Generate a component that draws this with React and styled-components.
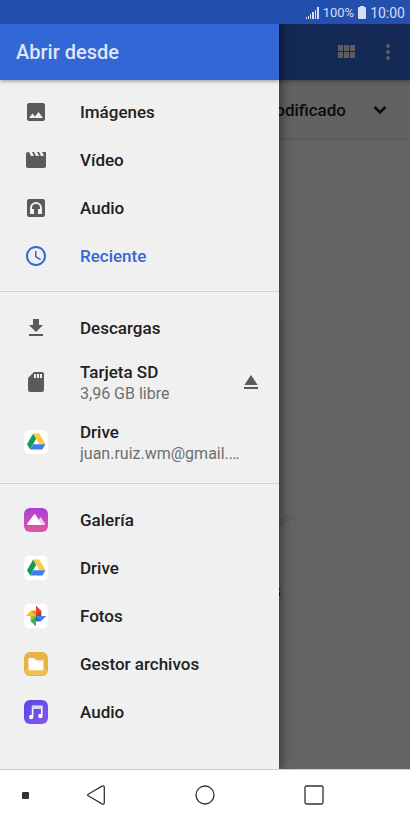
import React, { useState } from "react";
import styled, { createGlobalStyle } from "styled-components";

const GlobalStyle = createGlobalStyle`
  * {
    box-sizing: border-box;
  }

  body {
    margin: 0;
    background: #ffffff;
    font-family: Roboto, "Noto Sans", sans-serif;
  }

  button {
    border: 0;
    padding: 0;
    background: none;
    color: inherit;
    font: inherit;
    cursor: pointer;
  }
`;

const Screen = styled.div`
  display: flex;
  flex-direction: column;
  min-height: 100vh;
`;

const StatusBar = styled.div`
  display: flex;
  align-items: center;
  justify-content: flex-end;
  gap: 4px;
  height: 24px;
  padding: 2px 5px 0 0;
  background: #2350ae;
  color: #d5def2;
`;

const StatusText = styled.span`
  font-size: ${props => props.size};
  line-height: 22px;
`;

// page, scrim and drawer share one grid cell
const Stage = styled.div`
  display: grid;
  grid-template-columns: 100%;
  flex: 1;
  overflow: hidden;

  > * {
    grid-area: 1 / 1;
  }
`;

const Page = styled.main`
  display: flex;
  flex-direction: column;
  background: #fafafa;
`;

const Toolbar = styled.header`
  display: flex;
  align-items: center;
  justify-content: flex-end;
  gap: 18px;
  height: 56px;
  padding-right: 10px;
  background: #3367d6;
  color: #e8eaf0;
  box-shadow: 0 1px 4px rgba(0, 0, 0, 0.4);
  z-index: 1;
`;

const IconButton = styled.button`
  display: flex;
  width: 24px;
  height: 24px;
  flex: none;
`;

const SortBar = styled.div`
  display: flex;
  align-items: center;
  justify-content: flex-end;
  height: 60px;
  border-bottom: 1px solid #dcdcdc;
  background: #f4f4f4;
`;

const SortButton = styled.button`
  display: flex;
  align-items: center;
  gap: 22px;
  padding-right: 18px;
  font-size: 17px;
  font-weight: 500;
  line-height: 24px;
  color: #212121;
`;

const Empty = styled.div`
  display: flex;
  flex: 1;
  flex-direction: column;
  align-items: center;
  justify-content: center;
  gap: 52px;
  padding-top: 16px;
`;

const EmptyText = styled.p`
  margin: 0;
  font-size: 19px;
  line-height: 24px;
  color: #212121;
`;

const Scrim = styled.div`
  z-index: 2;
  background: rgba(0, 0, 0, 0.6);
`;

const Drawer = styled.aside`
  z-index: 3;
  width: calc(100% - 131px);
  background: #f0f0f0;
  box-shadow: 2px 0 10px rgba(0, 0, 0, 0.5);
`;

const DrawerHeader = styled.div`
  display: flex;
  align-items: center;
  height: 56px;
  padding: 0 16px;
  background: #3367d6;
  box-shadow: 0 1px 4px rgba(0, 0, 0, 0.4);
`;

const Title = styled.h1`
  margin: 0;
  font-size: 20px;
  font-weight: 500;
  line-height: 28px;
  color: #dfe8fb;
`;

const Roots = styled.nav`
  padding-bottom: 8px;
`;

const Section = styled.ul`
  margin: 0;
  padding: ${props => (props.$first ? "8px" : "12px")} 0 11px;
  list-style: none;

  & + & {
    border-top: 1px solid #d0d0d0;
  }
`;

const Row = styled.li`
  display: flex;
  align-items: center;
  height: ${props => (props.$tall ? "60px" : "48px")};
  padding-right: 16px;
`;

const RootButton = styled.button`
  display: flex;
  align-items: center;
  gap: 32px;
  flex: 1;
  min-width: 0;
  height: 100%;
  padding-left: 24px;
  text-align: left;
  color: ${props => (props.$selected ? "#3367d6" : "#212121")};
`;

const RootIcon = styled.span`
  display: flex;
  flex: none;
  width: 24px;
  height: 24px;
  color: ${props => (props.$selected ? "#3367d6" : "#5a5a5a")};
`;

const Labels = styled.span`
  display: flex;
  flex-direction: column;
  min-width: 0;
`;

const Label = styled.span`
  font-size: 17px;
  font-weight: 500;
  line-height: 22px;
`;

const Summary = styled.span`
  overflow: hidden;
  font-size: 16px;
  line-height: 21px;
  color: #6e6e6e;
  text-overflow: ellipsis;
  white-space: nowrap;
`;

const Eject = styled(IconButton)`
  color: #5a5a5a;
`;

const NavBar = styled.footer`
  display: grid;
  grid-template-columns: 42px 1fr 1fr 1fr 42px;
  height: 51px;
  border-top: 1px solid #cfcfcf;
  background: #ffffff;
  color: #333333;
`;

const NavButton = styled.button`
  display: flex;
  align-items: center;
  justify-content: center;
  padding-left: ${props => (props.$edge ? "9px" : "0")};
`;

const Glyph = ({ d, size = 24 }) => (
  <svg width={size} height={size} viewBox="0 0 24 24" fill="currentColor">
    <path d={d} />
  </svg>
);

const PATHS = {
  image:
    "M21 19V5c0-1.1-.9-2-2-2H5c-1.1 0-2 .9-2 2v14c0 1.1.9 2 2 2h14c1.1 0 2-.9 2-2zM8.500 13.500l2.500 3.010L14.500 12l4.500 6H5l3.500-4.500z",
  video:
    "M18 4l2 4h-3l-2-4h-2l2 4h-3l-2-4H8l2 4H7L5 4H4c-1.100 0-1.990.900-1.990 2L2 18c0 1.100.900 2 2 2h16c1.100 0 2-.900 2-2V4h-4z",
  audio:
    "M5 3h14a2 2 0 0 1 2 2v14a2 2 0 0 1-2 2H5a2 2 0 0 1-2-2V5a2 2 0 0 1 2-2zM12 6a6 6 0 0 0-6 6v6h4v-5H8v-1a4 4 0 0 1 8 0v1h-2v5h4v-6a6 6 0 0 0-6-6z",
  recent:
    "M11.990 2C6.470 2 2 6.480 2 12s4.470 10 9.990 10C17.520 22 22 17.520 22 12S17.520 2 11.990 2zM12 20c-4.420 0-8-3.580-8-8s3.580-8 8-8 8 3.580 8 8-3.580 8-8 8zm.5-13H11v6l5.250 3.150.75-1.230-4.500-2.670z",
  download: "M19 9h-4V3H9v6H5l7 7 7-7zM5 18v2h14v-2H5z",
  sd:
    "M18 2h-8L4.020 8 4 20c0 1.100.9 2 2 2h12c1.100 0 2-.9 2-2V4c0-1.100-.9-2-2-2zm-6 6h-2V4h2v4zm3 0h-2V4h2v4zm3 0h-2V4h2v4z",
  eject: "M5 17h14v2H5zm7-12L5.330 15h13.340z",
  grid:
    "M4 11h5V5H4v6zm0 7h5v-6H4v6zm6 0h5v-6h-5v6zm6 0h5v-6h-5v6zm-6-7h5V5h-5v6zm6-6v6h5V5h-5z",
  more:
    "M12 8c1.100 0 2-.9 2-2s-.9-2-2-2-2 .9-2 2 .9 2 2 2zm0 2c-1.100 0-2 .9-2 2s.9 2 2 2 2-.9 2-2-.9-2-2-2zm0 6c-1.100 0-2 .9-2 2s.9 2 2 2 2-.9 2-2-.9-2-2-2z",
  expand: "M16.400 8L12 12.400 7.600 8 5.700 9.900l6.300 6.300 6.300-6.300z"
};

const DriveIcon = () => (
  <svg width="24" height="24" viewBox="0 0 24 24">
    <rect width="24" height="24" rx="5" fill="#ffffff" />
    <path d="M9.200 3.500L12.200 8.800 6.200 19.500 3 14.200z" fill="#149b58" />
    <path d="M9.200 3.500h6L21.500 14.200h-6.200z" fill="#fcca45" />
    <path d="M9.300 14.200h12.200l-3.100 5.300H6.200z" fill="#3f7ee8" />
  </svg>
);

const GalleryIcon = () => (
  <svg width="24" height="24" viewBox="0 0 24 24">
    <defs>
      <linearGradient id="gallery" x1="0" y1="0" x2="0" y2="1">
        <stop offset="0" stopColor="#a940d6" />
        <stop offset="1" stopColor="#e0589f" />
      </linearGradient>
    </defs>
    <rect width="24" height="24" rx="6" fill="url(#gallery)" />
    <path d="M12 17l4-7.300q.6-.7 1.200 0L21 15.500q.6 1.500-.8 1.500z" fill="#f1cdee" />
    <path d="M3.800 17q-1.200-.2-.4-1.500L9.800 6.700q.9-1 1.700 0L18 17z" fill="#ffffff" />
  </svg>
);

const PhotosIcon = () => (
  <svg width="24" height="24" viewBox="0 0 24 24">
    <rect width="24" height="24" rx="5" fill="#ffffff" />
    <path d="M12 1.500L17.200 6.700V12H12z" fill="#e34435" />
    <path d="M12 12l5.200-5.200V12z" fill="#b9382d" />
    <path d="M22.200 12L17 17.200H12V12z" fill="#4285f4" />
    <path d="M12 12l5 5.200h-5z" fill="#2d62c4" />
    <path d="M12 22.400L6.800 17.200V12H12z" fill="#3fae49" />
    <path d="M12 12l-5.200 5.200V12z" fill="#8cc63f" />
    <path d="M1.800 12L7 6.800h5V12z" fill="#fbbf16" />
    <path d="M12 12L7 6.800h5z" fill="#ee8b22" />
  </svg>
);

const FilesIcon = () => (
  <svg width="24" height="24" viewBox="0 0 24 24">
    <rect width="24" height="24" rx="6" fill="#e8b244" />
    <path d="M1 17h22v1a5 5 0 0 1-5 5H6a5 5 0 0 1-5-5z" fill="#edc052" />
    <path
      d="M5.500 6H10l2 2h6.500a1 1 0 0 1 1 1v8a1.200 1.200 0 0 1-1.200 1.200H5.700A1.200 1.200 0 0 1 4.500 17V7a1 1 0 0 1 1-1z"
      fill="#ffffff"
    />
    <path d="M12 8h6.500a1 1 0 0 1 1 1v1h-5.500z" fill="#f8e6bd" />
  </svg>
);

const MusicIcon = () => (
  <svg width="24" height="24" viewBox="0 0 24 24">
    <defs>
      <linearGradient id="music" x1="0" y1="0" x2="1" y2="1">
        <stop offset="0" stopColor="#5248e4" />
        <stop offset="1" stopColor="#8757f2" />
      </linearGradient>
    </defs>
    <rect width="24" height="24" rx="6" fill="url(#music)" />
    <path d="M8.600 17V6.300h9.200v9.500" fill="none" stroke="#ffffff" strokeWidth="1.600" />
    <path d="M8 6h10.500v3H8z" fill="#dcd6fc" />
    <circle cx="7.200" cy="17" r="2.200" fill="#ffffff" />
    <circle cx="16.400" cy="16" r="2.200" fill="#ffffff" />
  </svg>
);

const SignalIcon = () => (
  <svg width="14" height="14" viewBox="0 0 14 14" fill="currentColor">
    <path d="M1 11h1v2H1zM3 10h1v3H3zM5 8h1v5H5zM7 6h2v7H7zM10 4h1v9h-1zM12 1h2v12h-2z" />
  </svg>
);

const BatteryIcon = () => (
  <svg width="8" height="14" viewBox="0 0 8 14" fill="currentColor">
    <path d="M2 0h4v1h1a1 1 0 0 1 1 1v10a1 1 0 0 1-1 1H1a1 1 0 0 1-1-1V2a1 1 0 0 1 1-1h1z" />
  </svg>
);

const SECTIONS = [
  [
    { id: "images", label: "Imágenes", icon: <Glyph d={PATHS.image} /> },
    { id: "video", label: "Vídeo", icon: <Glyph d={PATHS.video} /> },
    {
      id: "audio",
      label: "Audio",
      icon: (
        <svg width="24" height="24" viewBox="0 0 24 24" fill="currentColor">
          <path d={PATHS.audio} fillRule="evenodd" />
        </svg>
      )
    },
    { id: "recent", label: "Reciente", icon: <Glyph d={PATHS.recent} /> }
  ],
  [
    { id: "downloads", label: "Descargas", icon: <Glyph d={PATHS.download} /> },
    {
      id: "sd",
      label: "Tarjeta SD",
      summary: "3,96 GB libre",
      icon: <Glyph d={PATHS.sd} />,
      ejectable: true
    },
    {
      id: "drive",
      label: "Drive",
      summary: "juan.ruiz.wm@gmail.…",
      icon: <DriveIcon />
    }
  ],
  [
    { id: "gallery", label: "Galería", icon: <GalleryIcon /> },
    { id: "driveApp", label: "Drive", icon: <DriveIcon /> },
    { id: "photos", label: "Fotos", icon: <PhotosIcon /> },
    { id: "files", label: "Gestor archivos", icon: <FilesIcon /> },
    { id: "music", label: "Audio", icon: <MusicIcon /> }
  ]
];

const Root = ({ root, selected, onSelect }) => (
  <Row $tall={!!root.summary}>
    <RootButton $selected={selected} onClick={() => onSelect(root.id)}>
      <RootIcon $selected={selected}>{root.icon}</RootIcon>
      <Labels>
        <Label>{root.label}</Label>
        {root.summary && <Summary>{root.summary}</Summary>}
      </Labels>
    </RootButton>
    {root.ejectable && (
      <Eject aria-label="Expulsar">
        <Glyph d={PATHS.eject} />
      </Eject>
    )}
  </Row>
);

const App = () => {
  const [selected, setSelected] = useState("recent");

  return (
    <Screen>
      <GlobalStyle />
      <StatusBar>
        <SignalIcon />
        <StatusText size="13px">100%</StatusText>
        <BatteryIcon />
        <StatusText size="14px">10:00</StatusText>
      </StatusBar>

      <Stage>
        <Page>
          <Toolbar>
            <IconButton aria-label="Vista de cuadrícula">
              <Glyph d={PATHS.grid} />
            </IconButton>
            <IconButton aria-label="Más opciones">
              <Glyph d={PATHS.more} />
            </IconButton>
          </Toolbar>
          <SortBar>
            <SortButton>
              Modificado
              <Glyph d={PATHS.expand} />
            </SortButton>
          </SortBar>
          <Empty>
            <svg width="184" height="204" viewBox="0 0 184 204">
              <path d="M12 0h160v192H12z" fill="#f5f5f5" />
              <path d="M12 204l152-4 9-9 11 3-18 10z" fill="#e8e8e8" />
            </svg>
            <EmptyText>No hay elementos</EmptyText>
          </Empty>
        </Page>

        <Scrim />

        <Drawer>
          <DrawerHeader>
            <Title>Abrir desde</Title>
          </DrawerHeader>
          <Roots>
            {SECTIONS.map((roots, i) => (
              <Section key={i} $first={i === 0}>
                {roots.map(root => (
                  <Root
                    key={root.id}
                    root={root}
                    selected={root.id === selected}
                    onSelect={setSelected}
                  />
                ))}
              </Section>
            ))}
          </Roots>
        </Drawer>
      </Stage>

      <NavBar>
        <NavButton $edge aria-label="Fijar barra">
          <svg width="7" height="7" viewBox="0 0 7 7">
            <rect width="7" height="7" rx="1" fill="currentColor" />
          </svg>
        </NavButton>
        <NavButton aria-label="Atrás">
          <svg width="20" height="20" viewBox="0 0 20 20" fill="none">
            <path
              d="M2.200 9.200L16 1.200q2.300-.8 2.300 1.300v15q0 2.100-2.300 1.300L2.200 10.800q-1.200-.8 0-1.600z"
              stroke="currentColor"
              strokeWidth="1.300"
            />
          </svg>
        </NavButton>
        <NavButton aria-label="Inicio">
          <svg width="20" height="20" viewBox="0 0 20 20" fill="none">
            <circle cx="10" cy="10" r="9" stroke="currentColor" strokeWidth="1.300" />
          </svg>
        </NavButton>
        <NavButton aria-label="Recientes">
          <svg width="20" height="20" viewBox="0 0 20 20" fill="none">
            <rect
              x="1"
              y="1"
              width="18"
              height="18"
              rx="1.500"
              stroke="currentColor"
              strokeWidth="1.300"
            />
          </svg>
        </NavButton>
      </NavBar>
    </Screen>
  );
};

export default App;
